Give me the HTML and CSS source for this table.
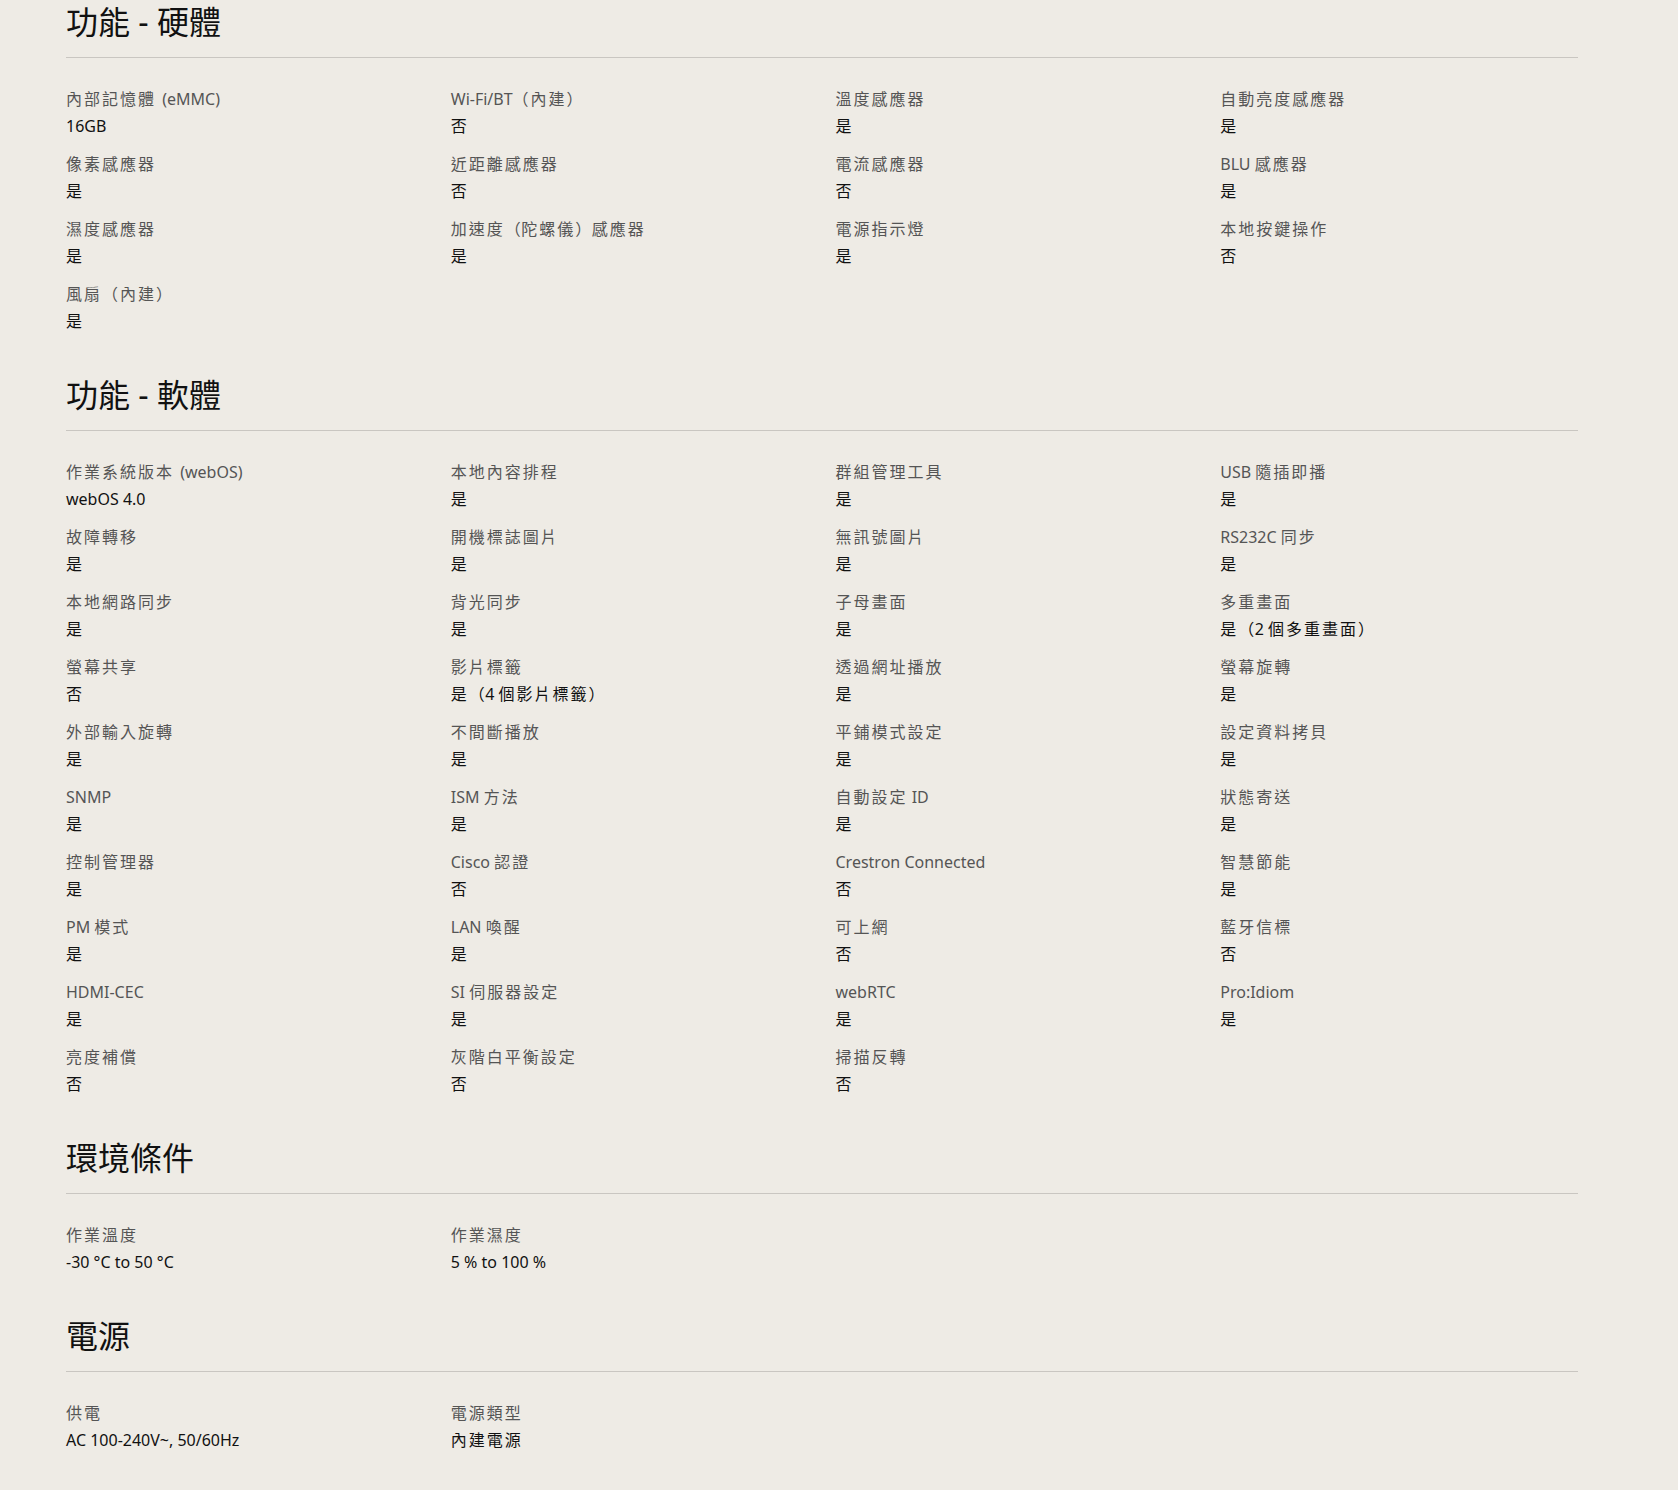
FILE: index.html
```html
<!DOCTYPE html>
<html lang="zh-Hant">
<head>
<meta charset="utf-8">
<title>規格</title>
<link rel="stylesheet" href="styles.css">
</head>
<body>
<main class="specs">
  <section class="spec-section">
    <h2 class="spec-title">功能 - 硬體</h2>
    <dl class="spec-grid">
      <div class="spec-item"><dt>內部記憶體 <span class="en">(eMMC)</span></dt><dd><span class="en">16GB</span></dd></div>
      <div class="spec-item"><dt><span class="en">Wi-Fi/BT</span>（內建）</dt><dd>否</dd></div>
      <div class="spec-item"><dt>溫度感應器</dt><dd>是</dd></div>
      <div class="spec-item"><dt>自動亮度感應器</dt><dd>是</dd></div>
      <div class="spec-item"><dt>像素感應器</dt><dd>是</dd></div>
      <div class="spec-item"><dt>近距離感應器</dt><dd>否</dd></div>
      <div class="spec-item"><dt>電流感應器</dt><dd>否</dd></div>
      <div class="spec-item"><dt><span class="en">BLU </span>感應器</dt><dd>是</dd></div>
      <div class="spec-item"><dt>濕度感應器</dt><dd>是</dd></div>
      <div class="spec-item"><dt>加速度<span class="paren">（</span>陀螺儀<span class="paren">）</span>感應器</dt><dd>是</dd></div>
      <div class="spec-item"><dt>電源指示燈</dt><dd>是</dd></div>
      <div class="spec-item"><dt>本地按鍵操作</dt><dd>否</dd></div>
      <div class="spec-item"><dt>風扇（內建）</dt><dd>是</dd></div>
    </dl>
  </section>

  <section class="spec-section">
    <h2 class="spec-title">功能 - 軟體</h2>
    <dl class="spec-grid">
      <div class="spec-item"><dt>作業系統版本 <span class="en">(webOS)</span></dt><dd><span class="en">webOS 4.0</span></dd></div>
      <div class="spec-item"><dt>本地內容排程</dt><dd>是</dd></div>
      <div class="spec-item"><dt>群組管理工具</dt><dd>是</dd></div>
      <div class="spec-item"><dt><span class="en">USB </span>隨插即播</dt><dd>是</dd></div>
      <div class="spec-item"><dt>故障轉移</dt><dd>是</dd></div>
      <div class="spec-item"><dt>開機標誌圖片</dt><dd>是</dd></div>
      <div class="spec-item"><dt>無訊號圖片</dt><dd>是</dd></div>
      <div class="spec-item"><dt><span class="en">RS232C </span>同步</dt><dd>是</dd></div>
      <div class="spec-item"><dt>本地網路同步</dt><dd>是</dd></div>
      <div class="spec-item"><dt>背光同步</dt><dd>是</dd></div>
      <div class="spec-item"><dt>子母畫面</dt><dd>是</dd></div>
      <div class="spec-item"><dt>多重畫面</dt><dd>是<span class="paren">（</span><span class="en">2 </span>個多重畫面<span class="paren">）</span></dd></div>
      <div class="spec-item"><dt>螢幕共享</dt><dd>否</dd></div>
      <div class="spec-item"><dt>影片標籤</dt><dd>是<span class="paren">（</span><span class="en">4 </span>個影片標籤<span class="paren">）</span></dd></div>
      <div class="spec-item"><dt>透過網址播放</dt><dd>是</dd></div>
      <div class="spec-item"><dt>螢幕旋轉</dt><dd>是</dd></div>
      <div class="spec-item"><dt>外部輸入旋轉</dt><dd>是</dd></div>
      <div class="spec-item"><dt>不間斷播放</dt><dd>是</dd></div>
      <div class="spec-item"><dt>平鋪模式設定</dt><dd>是</dd></div>
      <div class="spec-item"><dt>設定資料拷貝</dt><dd>是</dd></div>
      <div class="spec-item"><dt><span class="en">SNMP</span></dt><dd>是</dd></div>
      <div class="spec-item"><dt><span class="en">ISM </span>方法</dt><dd>是</dd></div>
      <div class="spec-item"><dt>自動設定<span class="en"> ID</span></dt><dd>是</dd></div>
      <div class="spec-item"><dt>狀態寄送</dt><dd>是</dd></div>
      <div class="spec-item"><dt>控制管理器</dt><dd>是</dd></div>
      <div class="spec-item"><dt><span class="en">Cisco </span>認證</dt><dd>否</dd></div>
      <div class="spec-item"><dt><span class="en">Crestron Connected</span></dt><dd>否</dd></div>
      <div class="spec-item"><dt>智慧節能</dt><dd>是</dd></div>
      <div class="spec-item"><dt><span class="en">PM </span>模式</dt><dd>是</dd></div>
      <div class="spec-item"><dt><span class="en">LAN </span>喚醒</dt><dd>是</dd></div>
      <div class="spec-item"><dt>可上網</dt><dd>否</dd></div>
      <div class="spec-item"><dt>藍牙信標</dt><dd>否</dd></div>
      <div class="spec-item"><dt><span class="en">HDMI-CEC</span></dt><dd>是</dd></div>
      <div class="spec-item"><dt><span class="en">SI </span>伺服器設定</dt><dd>是</dd></div>
      <div class="spec-item"><dt><span class="en">webRTC</span></dt><dd>是</dd></div>
      <div class="spec-item"><dt><span class="en">Pro:Idiom</span></dt><dd>是</dd></div>
      <div class="spec-item"><dt>亮度補償</dt><dd>否</dd></div>
      <div class="spec-item"><dt>灰階白平衡設定</dt><dd>否</dd></div>
      <div class="spec-item"><dt>掃描反轉</dt><dd>否</dd></div>
    </dl>
  </section>

  <section class="spec-section">
    <h2 class="spec-title">環境條件</h2>
    <dl class="spec-grid">
      <div class="spec-item"><dt>作業溫度</dt><dd><span class="en">-30 °C to 50 °C</span></dd></div>
      <div class="spec-item"><dt>作業濕度</dt><dd><span class="en">5 % to 100 %</span></dd></div>
    </dl>
  </section>

  <section class="spec-section">
    <h2 class="spec-title">電源</h2>
    <dl class="spec-grid">
      <div class="spec-item"><dt>供電</dt><dd><span class="en">AC 100-240V~, 50/60Hz</span></dd></div>
      <div class="spec-item"><dt>電源類型</dt><dd>內建電源</dd></div>
    </dl>
  </section>
</main>
</body>
</html>
```

FILE: styles.css
```css
html, body {
  margin: 0;
  padding: 0;
  background: #eeebe5;
}

body {
  font-family: "Noto Sans", "Noto Sans CJK TC", sans-serif;
  color: #111;
}

.specs {
  margin-left: 66px;
  width: 1512px;
  padding-top: 2px;
  padding-bottom: 30px;
}

.spec-title {
  margin: 0;
  font-size: 32px;
  line-height: 40px;
  font-weight: 400;
  color: #111;
  padding-bottom: 15px;
  border-bottom: 1px solid #c9c6c1;
}

.spec-grid {
  margin: 0 -27px 0 0;
  padding: 28px 0 40px;
  display: grid;
  grid-template-columns: repeat(4, 1fr);
  row-gap: 11px;
}

.spec-section:last-child .spec-grid {
  padding-bottom: 0;
}

.spec-item {
  display: flex;
  flex-direction: column;
}

.spec-item dt,
.spec-item dd {
  font-size: 16px;
  line-height: 27px;
  letter-spacing: 2px;
}

.spec-item dt {
  color: #555;
}

.spec-item dd {
  margin: 0;
  color: #111;
}

.spec-item .en {
  letter-spacing: 0;
}

.spec-item .paren {
  letter-spacing: 0.5px;
}
```
